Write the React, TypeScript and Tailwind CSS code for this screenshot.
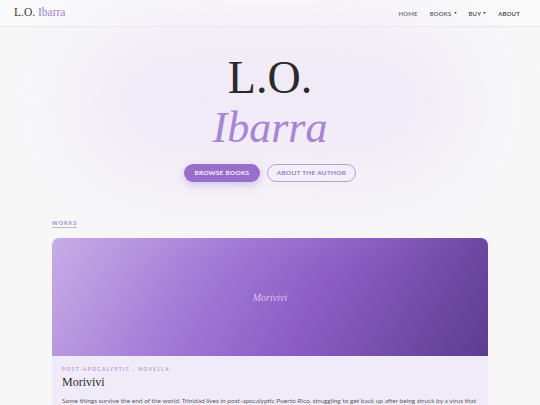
import React from 'react'

const serif = "font-['Liberation_Serif',serif]"
const sans = "font-['Lato','Liberation_Sans',sans-serif]"

function Caret() {
  return (
    <svg width="3" height="2" viewBox="0 0 4 3" className="ml-[2px]">
      <path d="M0 0 L4 0 L2 3 Z" fill="#3a3a3a" />
    </svg>
  )
}

function Header() {
  return (
    <header className="h-[27px] flex items-center justify-between px-[14px] bg-[#f9f9fa] border-b border-[#ebe6f4]">
      <div className={`${serif} text-[11.5px] leading-none`}>
        <span className="text-[#3b3b3b]">L.O.</span>{' '}
        <span className="text-[#a07fcf]">Ibarra</span>
      </div>
      <nav className={`${sans} flex items-center gap-[12px] text-[6px] font-semibold tracking-[0.03em] text-[#3a3a3a] pr-[6px]`}>
        <span>HOME</span>
        <span className="flex items-center">BOOKS<Caret /></span>
        <span className="flex items-center">BUY<Caret /></span>
        <span>ABOUT</span>
      </nav>
    </header>
  )
}

function Hero() {
  return (
    <section className="relative flex flex-col items-center pt-[28px] pb-[25px]">
      {/* soft glow */}
      <div className="absolute left-[80px] top-[-5px] w-[380px] h-[160px] rounded-full bg-[#eee7f7] blur-[40px] opacity-80" />
      <h1 className={`${serif} relative text-[46px] leading-[46px] text-[#2a2a2a] font-normal`}>L.O.</h1>
      <h2 className={`${serif} relative italic text-[44px] leading-[44px] text-[#a884d6] font-normal mt-[5px]`}>Ibarra</h2>
      <div className={`${sans} relative flex gap-[7px] mt-[14px]`}>
        <button className="h-[18px] w-[76px] rounded-full bg-[#9a6fcc] text-white text-[6.5px] font-semibold tracking-[0.04em] shadow-[0_3px_8px_rgba(154,111,204,0.35)]">
          BROWSE BOOKS
        </button>
        <button className="h-[18px] w-[89px] rounded-full border border-[#b89ddd] text-[#8f6cc2] text-[6.5px] font-semibold tracking-[0.04em] bg-transparent">
          ABOUT THE AUTHOR
        </button>
      </div>
    </section>
  )
}

function Works() {
  return (
    <section className="px-[52px]">
      <div className={`${sans} inline-block text-[5.5px] leading-[7px] font-semibold tracking-[0.18em] text-[#9a80c4] border-b border-[#b9b9c8]`}>
        WORKS
      </div>
      <div className="mt-[7px] rounded-[7px] overflow-hidden bg-[#f0ebf8]">
        <div className="h-[118px] flex items-center justify-center bg-[linear-gradient(120deg,#c8ade6_0%,#a179d6_35%,#8b5dc4_60%,#5c3d8f_100%)]">
          <span className={`${serif} italic text-[10px] text-[#d7c4ef]`}>Morivivi</span>
        </div>
        <div className="px-[10px] pt-[10px] pb-[6px]">
          <div className={`${sans} text-[5px] leading-[7px] font-semibold tracking-[0.26em] text-[#b191d6]`}>
            POST-APOCALYPTIC · NOVELLA
          </div>
          <div className={`${serif} text-[12px] leading-[14px] text-[#2b2b2b] mt-[2px]`}>Morivivi</div>
          <p className={`${sans} text-[6.5px] leading-[9px] text-[#5d5d63] mt-[7px] whitespace-nowrap`}>
            Some things survive the end of the world. Trinidad lives in post-apocalyptic Puerto Rico, struggling to get back up after being struck by a virus that
          </p>
        </div>
      </div>
    </section>
  )
}

export default function App() {
  return (
    <div className="w-[540px] h-[405px] overflow-hidden bg-[#f7f7f8]">
      <Header />
      <Hero />
      <Works />
    </div>
  )
}
